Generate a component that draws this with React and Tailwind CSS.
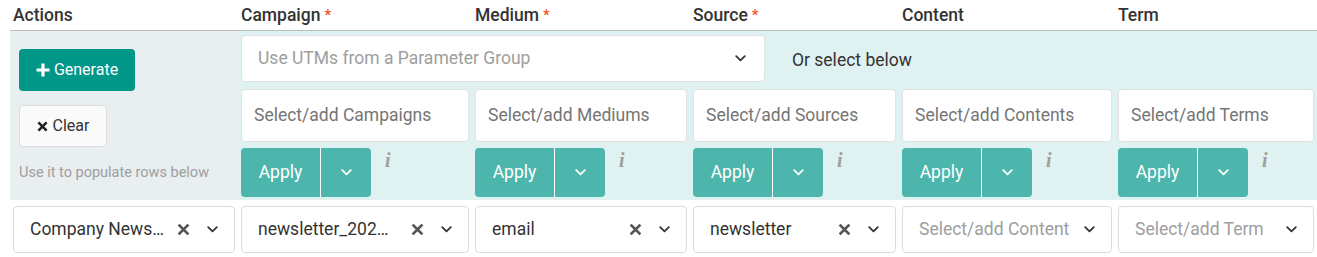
import React from "react";

const Chevron = ({ className = "", color = "#333" }) => (
  <svg width="11" height="7" viewBox="0 0 11 7" className={className}>
    <path d="M1.2 1.2 L5.5 5.3 L9.8 1.2" fill="none" stroke={color} strokeWidth="1.8" strokeLinecap="round" strokeLinejoin="round" />
  </svg>
);

const XIcon = ({ size = 12, color = "#555", sw = 2.6 }) => (
  <svg width={size} height={size} viewBox="0 0 12 12">
    <path d="M1.5 1.5 L10.5 10.5 M10.5 1.5 L1.5 10.5" stroke={color} strokeWidth={sw} strokeLinecap="butt" />
  </svg>
);

const Req = () => <span className="text-[#f4511e] ml-[4px] text-[15px] relative top-[-1px]">*</span>;

const ApplyRow = () => (
  <div className="flex items-start">
    <div className="flex h-[49px] rounded-[4px] overflow-hidden bg-[#4db6ac]">
      <div className="w-[80px] flex items-center justify-center text-white text-[17.5px] border-r border-white">Apply</div>
      <div className="w-[50px] flex items-center justify-center">
        <Chevron color="#ffffff" />
      </div>
    </div>
    <span className="ml-[14px] mt-[2px] text-[#9e9e9e] text-[20px] font-bold italic leading-none" style={{ fontFamily: '"Liberation Serif", "DejaVu Serif", serif' }}>i</span>
  </div>
);

const FilterInput = ({ ph }) => (
  <div className="h-[53px] bg-white border border-[#e2e2e2] rounded-[4px] flex items-center pl-[12px] text-[17.5px] text-[#757575] whitespace-nowrap overflow-hidden">{ph}</div>
);

const RowSelect = ({ value, placeholder, clear }) => (
  <div className="h-[47px] bg-white border border-[#dcdcdc] rounded-[4px] flex items-center pl-[16px] pr-[16px]">
    <span className={"flex-1 whitespace-nowrap text-[17.5px] " + (value ? "text-[#333]" : "text-[#9e9e9e]")}>{value || placeholder}</span>
    {clear && <span className="mr-[17px] flex items-center"><XIcon size={13} /></span>}
    <Chevron />
  </div>
);

export default function App() {
  const cols = "grid grid-cols-[222px_228px_212px_203px_210px_196px] gap-x-[6px]";
  const inner = "grid grid-cols-[228px_212px_203px_210px_196px] gap-x-[6px]";
  return (
    <div className="w-[1317px] h-[257px] bg-white text-[#333]" style={{ fontFamily: 'Roboto, "Noto Sans", sans-serif' }}>
      {/* header */}
      <div className={cols + " pl-[13px] h-[30px] items-center text-[17.5px] font-medium text-[#333]"}>
        <div>Actions</div>
        <div>Campaign<Req /></div>
        <div>Medium<Req /></div>
        <div>Source<Req /></div>
        <div>Content</div>
        <div>Term</div>
      </div>
      <div className="h-px bg-[#bdbdbd] ml-[10px]" />
      {/* band */}
      <div className="ml-[10px] flex h-[169px] bg-[linear-gradient(to_right,#e9eef0_228px,#e0f1f1_228px)]">
        <div className="w-[228px] pl-[9px] pt-[18px] flex flex-col items-start">
          <div className="h-[42px] w-[116px] rounded-[4px] bg-[#009688] text-white text-[16px] flex items-center justify-center gap-[4px]">
            <svg width="14" height="14" viewBox="0 0 14 14"><path d="M7 0.5 V13.5 M0.5 7 H13.5" stroke="#fff" strokeWidth="3.2" /></svg>
            <span>Generate</span>
          </div>
          <div className="mt-[14px] h-[42px] w-[88px] rounded-[4px] bg-[#fafafa] border border-[#dddddd] text-[#333] text-[16px] flex items-center justify-center gap-[5px]">
            <XIcon size={11} color="#222" sw={2.8} />
            <span>Clear</span>
          </div>
          <div className="mt-[15px] text-[14.5px] text-[#9e9e9e] whitespace-nowrap">Use it to populate rows below</div>
        </div>
        <div className="flex-1 pl-[3px] pt-[4px]">
          <div className="flex items-center">
            <div className="w-[524px] h-[47px] bg-white border border-[#e2e2e2] rounded-[4px] flex items-center pl-[16px] pr-[18px]">
              <span className="flex-1 text-[17.5px] text-[#9e9e9e]">Use UTMs from a Parameter Group</span>
              <Chevron />
            </div>
            <span className="ml-[27px] mt-[4px] text-[17.5px] text-[#333]">Or select below</span>
          </div>
          <div className={inner + " mt-[7px]"}>
            <FilterInput ph="Select/add Campaigns" />
            <FilterInput ph="Select/add Mediums" />
            <FilterInput ph="Select/add Sources" />
            <FilterInput ph="Select/add Contents" />
            <FilterInput ph="Select/add Terms" />
          </div>
          <div className={inner + " mt-[6px]"}>
            <ApplyRow />
            <ApplyRow />
            <ApplyRow />
            <ApplyRow />
            <ApplyRow />
          </div>
        </div>
      </div>
      {/* data row */}
      <div className={cols + " pl-[13px] mt-[6px]"}>
        <RowSelect value="Company News…" clear />
        <RowSelect value="newsletter_202…" clear />
        <RowSelect value="email" clear />
        <RowSelect value="newsletter" clear />
        <RowSelect placeholder="Select/add Content" />
        <RowSelect placeholder="Select/add Term" />
      </div>
    </div>
  );
}
